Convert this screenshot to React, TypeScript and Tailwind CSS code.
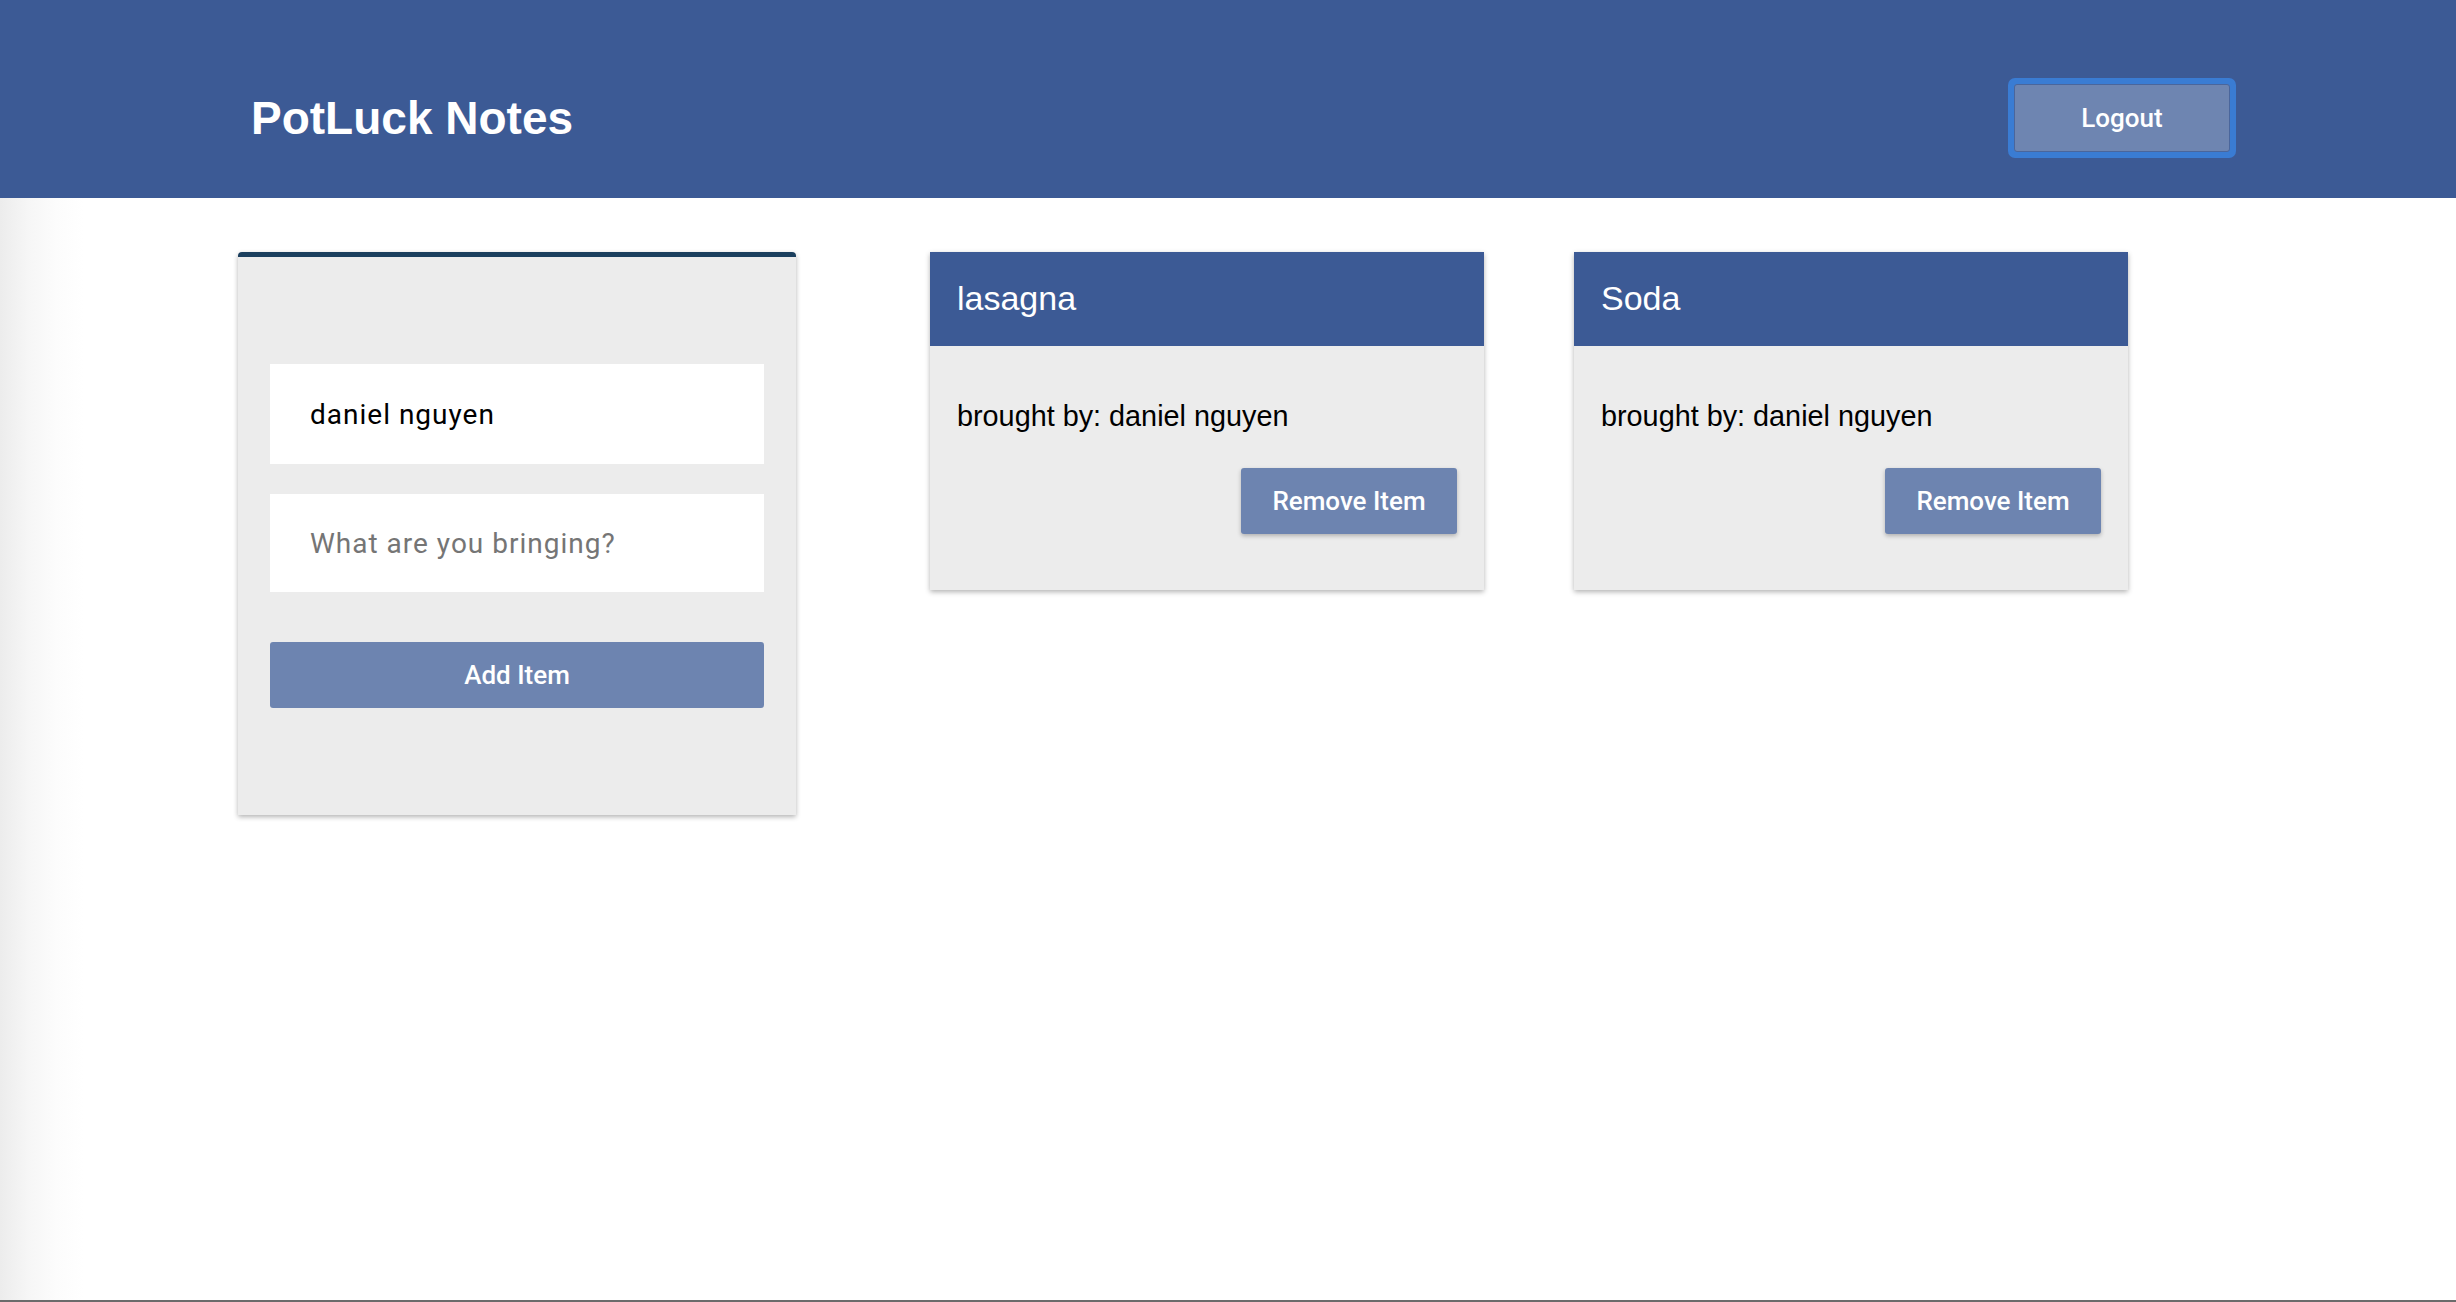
const items = [
  { name: "lasagna", by: "daniel nguyen" },
  { name: "Soda", by: "daniel nguyen" }
];

const helv = "font-['Liberation_Sans',Arial,sans-serif]";
const robo = "font-['Roboto','Liberation_Sans',sans-serif]";

function ItemCard({ name, by }: { name: string; by: string }) {
  return (
    <div className="w-[554px] bg-[#ececec] shadow-[0_2px_5px_rgba(0,0,0,0.3)]">
      <div className="h-[94px] bg-[#3c5a95] px-[27px] flex items-center">
        <h3 className={`${helv} text-[34px] text-white font-normal -mt-[2px]`}>{name}</h3>
      </div>
      <div className="pt-[54px] px-[27px] pb-[56px]">
        <p className={`${helv} text-[28.8px] leading-[32px] text-black`}>brought by: {by}</p>
        <div className="flex justify-end mt-[36px]">
          <button
            className={`${robo} h-[66px] w-[216px] rounded-[3px] bg-[#6d84b0] text-white text-[26px] font-medium shadow-[0_2px_4px_rgba(0,0,0,0.25)]`}
          >
            Remove Item
          </button>
        </div>
      </div>
    </div>
  );
}

export default function App() {
  return (
    <div className="min-h-[1302px] flex flex-col bg-white border-b-2 border-[#6b6b6b]">
      {/* Header */}
      <header className="h-[198px] bg-[#3c5a95] flex items-center justify-between pt-[38px] pl-[251px] pr-[220px]">
        <h1 className={`${helv} text-[46px] font-bold text-white`}>PotLuck Notes</h1>
        <div className="rounded-[7px] bg-[#3a7cd3] p-[6px]">
          <button
            className={`${robo} h-[68px] w-[216px] rounded-[3px] bg-[#6e85b1] border border-[#4a669c] text-white text-[26px] font-medium`}
          >
            Logout
          </button>
        </div>
      </header>

      {/* Main */}
      <main className="flex-1 bg-[linear-gradient(to_right,#ececec_0px,#f6f6f6_28px,#fcfcfc_56px,#ffffff_84px)] pt-[54px] pl-[238px]">
        <div className="flex items-start">
          {/* Add item form */}
          <div className="w-[558px] h-[563px] bg-[#ececec] border-t-[5px] border-[#1b3f5e] rounded-t-[4px] shadow-[0_2px_5px_rgba(0,0,0,0.3)] pt-[107px] px-[32px]">
            <input
              readOnly
              value="daniel nguyen"
              className={`${robo} block w-full h-[100px] bg-white pl-[40px] text-[28px] tracking-[1px] text-black outline-none`}
            />
            <input
              placeholder="What are you bringing?"
              className={`${robo} block w-full h-[98px] mt-[30px] bg-white pl-[40px] text-[28px] tracking-[1px] text-black placeholder:text-[#757575] outline-none`}
            />
            <button
              className={`${robo} block w-full h-[66px] mt-[50px] rounded-[3px] bg-[#6d84b0] text-white text-[26px] font-medium`}
            >
              Add Item
            </button>
          </div>

          {/* Items */}
          <div className="ml-[134px] flex items-start gap-[90px]">
            {items.map((item) => (
              <ItemCard key={item.name} name={item.name} by={item.by} />
            ))}
          </div>
        </div>
      </main>
    </div>
  );
}
